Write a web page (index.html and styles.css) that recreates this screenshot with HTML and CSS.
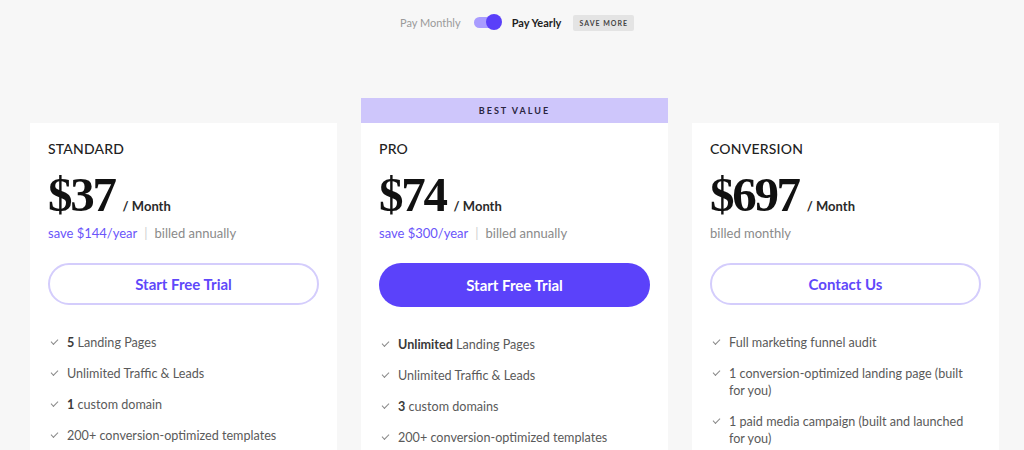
FILE: index.html
```html
<!DOCTYPE html>
<html lang="en">
<head>
<meta charset="utf-8">
<title>Pricing</title>
<link rel="stylesheet" href="styles.css">
</head>
<body>
<div class="billing">
  <span class="billing-off">Pay Monthly</span>
  <span class="switch"><span class="knob"></span></span>
  <span class="billing-on">Pay Yearly</span>
  <span class="badge">SAVE MORE</span>
</div>

<div class="plans">
  <section class="plan">
    <div class="ribbon ribbon-empty"></div>
    <div class="card">
      <h2 class="plan-name">STANDARD</h2>
      <div class="price"><span class="amount">$37</span><span class="per">/ Month</span></div>
      <p class="billed"><span class="save">save $144/year</span><span class="sep">|</span>billed annually</p>
      <a class="btn btn-outline">Start Free Trial</a>
      <ul class="features">
        <li><b>5</b> Landing Pages</li>
        <li>Unlimited Traffic &amp; Leads</li>
        <li><b>1</b> custom domain</li>
        <li>200+ conversion-optimized templates</li>
      </ul>
    </div>
  </section>

  <section class="plan">
    <div class="ribbon">BEST VALUE</div>
    <div class="card">
      <h2 class="plan-name">PRO</h2>
      <div class="price"><span class="amount">$74</span><span class="per">/ Month</span></div>
      <p class="billed"><span class="save">save $300/year</span><span class="sep">|</span>billed annually</p>
      <a class="btn btn-solid">Start Free Trial</a>
      <ul class="features">
        <li><b>Unlimited</b> Landing Pages</li>
        <li>Unlimited Traffic &amp; Leads</li>
        <li><b>3</b> custom domains</li>
        <li>200+ conversion-optimized templates</li>
      </ul>
    </div>
  </section>

  <section class="plan">
    <div class="ribbon ribbon-empty"></div>
    <div class="card">
      <h2 class="plan-name">CONVERSION</h2>
      <div class="price"><span class="amount">$697</span><span class="per">/ Month</span></div>
      <p class="billed">billed monthly</p>
      <a class="btn btn-outline">Contact Us</a>
      <ul class="features">
        <li>Full marketing funnel audit</li>
        <li>1 conversion-optimized landing page (built for you)</li>
        <li>1 paid media campaign (built and launched for you)</li>
      </ul>
    </div>
  </section>
</div>
</body>
</html>
```

FILE: styles.css
```css
* { box-sizing: border-box; }

html, body {
  margin: 0;
  padding: 0;
  background: #f7f7f7;
  font-family: Lato, "Noto Sans", Arial, sans-serif;
  color: #222;
  overflow: hidden;
}

.billing {
  display: flex;
  align-items: center;
  justify-content: center;
  padding-top: 14px;
  height: 31px;
  font-size: 11px;
  margin-left: 10px;
}

.billing-off {
  color: #9a9a9a;
  margin-right: 13px;
}

.switch {
  position: relative;
  display: inline-block;
  width: 26px;
  height: 11px;
  border-radius: 6px;
  background: #a99cff;
  margin-right: 12px;
}

.knob {
  position: absolute;
  right: -2px;
  top: -3px;
  width: 16px;
  height: 16px;
  border-radius: 50%;
  background: #5a3ff9;
}

.billing-on {
  font-weight: 700;
  color: #1e1e1e;
  margin-right: 12px;
}

.badge {
  background: #e4e4e4;
  color: #444;
  font-size: 7px;
  font-weight: 700;
  letter-spacing: 1px;
  padding: 4px 6px;
  border-radius: 2px;
}

.plans {
  display: grid;
  grid-template-columns: repeat(3, 307px);
  column-gap: 24px;
  margin: 67px 0 0 30px;
}

.ribbon {
  height: 25px;
  background: #cec6fb;
  color: #2a2540;
  font-size: 9px;
  font-weight: 700;
  letter-spacing: 2px;
  display: flex;
  align-items: center;
  justify-content: center;
}

.ribbon-empty {
  background: transparent;
}

.card {
  background: #fff;
  padding: 16px 18px 40px;
  min-height: 400px;
}

.plan-name {
  margin: 0;
  font-size: 14px;
  line-height: 20px;
  font-weight: 500;
  letter-spacing: 0.2px;
  color: #222;
}

.price {
  display: flex;
  align-items: baseline;
  margin-top: 12px;
  height: 48px;
}

.amount {
  font-family: "Liberation Serif", "Times New Roman", serif;
  font-weight: 700;
  font-size: 49px;
  line-height: 48px;
  letter-spacing: -2.3px;
  color: #111;
}

.per {
  font-size: 13px;
  font-weight: 700;
  color: #2a2a2a;
  margin-left: 8px;
}

.billed {
  margin: 5px 0 0;
  font-size: 13px;
  line-height: 18px;
  color: #8a8a8a;
}

.save {
  color: #6a55fa;
}

.sep {
  color: #cfcfcf;
  margin: 0 7px;
}

.btn {
  display: flex;
  align-items: center;
  justify-content: center;
  height: 42px;
  margin-top: 21px;
  border-radius: 21px;
  font-size: 15px;
  font-weight: 700;
  text-decoration: none;
}

.btn-outline {
  border: 2px solid #d4cdfc;
  color: #6048fa;
  background: #fff;
}

.btn-solid {
  background: #5b42fa;
  color: #fff;
  height: 44px;
  border-radius: 22px;
}

.features {
  list-style: none;
  margin: 29px 0 0;
  padding: 0;
}

.features li {
  position: relative;
  padding-left: 19px;
  font-size: 12.6px;
  line-height: 17px;
  color: #5a5a5a;
  margin-bottom: 14px;
  padding-right: 4px;
}

.features li b {
  font-weight: 700;
  color: #3a3a3a;
}

.features li::before {
  content: "";
  position: absolute;
  left: 3px;
  top: 5px;
  width: 6px;
  height: 3px;
  border-left: 1.3px solid #8a8a8a;
  border-bottom: 1.3px solid #8a8a8a;
  transform: rotate(-45deg);
}
```
